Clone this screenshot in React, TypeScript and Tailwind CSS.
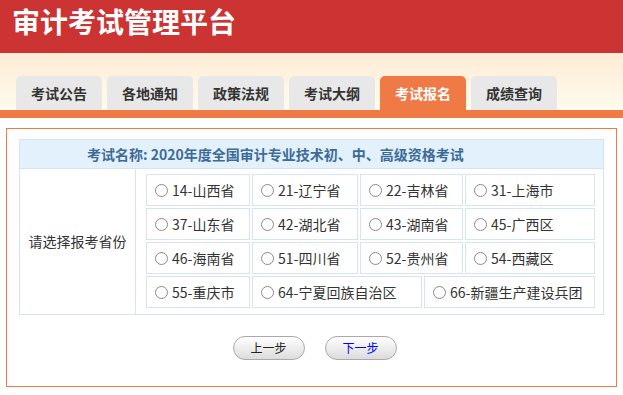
import React from 'react';

const TABS = ['考试公告', '各地通知', '政策法规', '考试大纲', '考试报名', '成绩查询'];
const ACTIVE_TAB = '考试报名';

// 省份选项，每行一组，宽度按参考图
const ROWS: { label: string; w: string }[][] = [
  [
    { label: '14-山西省', w: 'w-[104px]' },
    { label: '21-辽宁省', w: 'w-[106px]' },
    { label: '22-吉林省', w: 'w-[103px]' },
    { label: '31-上海市', w: 'w-[130px]' },
  ],
  [
    { label: '37-山东省', w: 'w-[104px]' },
    { label: '42-湖北省', w: 'w-[106px]' },
    { label: '43-湖南省', w: 'w-[103px]' },
    { label: '45-广西区', w: 'w-[130px]' },
  ],
  [
    { label: '46-海南省', w: 'w-[104px]' },
    { label: '51-四川省', w: 'w-[106px]' },
    { label: '52-贵州省', w: 'w-[103px]' },
    { label: '54-西藏区', w: 'w-[130px]' },
  ],
  [
    { label: '55-重庆市', w: 'w-[104px]' },
    { label: '64-宁夏回族自治区', w: 'w-[170px]' },
    { label: '66-新疆生产建设兵团', w: 'w-[171px]' },
  ],
];

function Option({ label, w }: { label: string; w: string }) {
  return (
    <label className={`${w} h-[32px] border border-[#d6e3f0] flex items-center pl-[8px] gap-[4px] text-[14px] text-[#333] cursor-pointer`}>
      <span className="w-[13px] h-[13px] rounded-full border border-[#8a8a8a] bg-white shrink-0" />
      <span>{label}</span>
    </label>
  );
}

export default function App() {
  return (
    <div className="w-[623px] h-[395px] bg-white font-['Noto_Sans_CJK_SC',sans-serif] overflow-hidden">
      {/* 头部 */}
      <div className="h-[53px] bg-[#cc3333] pl-[12px] pt-[7px]">
        <h1 className="text-white text-[28px] leading-[28px] font-bold">审计考试管理平台</h1>
      </div>

      {/* 导航 */}
      <div className="h-[57px] bg-gradient-to-b from-[#fdecd5] to-[#fffbee] flex items-end pl-[16px] gap-[5px]">
        {TABS.map((tab) => (
          <div
            key={tab}
            className={`w-[86px] h-[34px] rounded-t-[5px] flex items-center justify-center text-[14px] font-bold ${
              tab === ACTIVE_TAB ? 'bg-[#ef7a46] text-white' : 'bg-[#e8e8e8] text-[#333]'
            }`}
          >
            {tab}
          </div>
        ))}
      </div>
      <div className="h-[8px] bg-[#ef7a46]" />

      {/* 内容 */}
      <div className="px-[6px] pt-[10px]">
        <div className="h-[259px] border border-[#ef7a46] px-[12px] pt-[10px]">
          <div className="border border-[#d6e3f0]">
            <div className="h-[29px] bg-[#e2f1fb] border-b border-[#d6e3f0] flex items-center pl-[67px] text-[14px] font-bold text-[#3d6b99]">
              考试名称: 2020年度全国审计专业技术初、中、高级资格考试
            </div>
            <div className="flex">
              <div className="w-[116px] border-r border-[#d6e3f0] flex items-center justify-center text-[14px] text-[#333]">
                请选择报考省份
              </div>
              <div className="flex flex-col gap-[2px] pt-[5px] pb-[6px] pl-[10px]">
                {ROWS.map((row, i) => (
                  <div key={i} className="flex gap-[2px]">
                    {row.map((opt) => (
                      <Option key={opt.label} label={opt.label} w={opt.w} />
                    ))}
                  </div>
                ))}
              </div>
            </div>
          </div>

          {/* 按钮 */}
          <div className="flex justify-center gap-[20px] mt-[21px] pl-[6px]">
            <button className="w-[72px] h-[24px] rounded-full border border-[#aaa] bg-gradient-to-b from-white to-[#dcdcdc] text-[12px] text-[#222]">
              上一步
            </button>
            <button className="w-[72px] h-[24px] rounded-full border border-[#aaa] bg-gradient-to-b from-white to-[#dcdcdc] text-[12px] text-[#0000ff]">
              下一步
            </button>
          </div>
        </div>
      </div>
    </div>
  );
}
